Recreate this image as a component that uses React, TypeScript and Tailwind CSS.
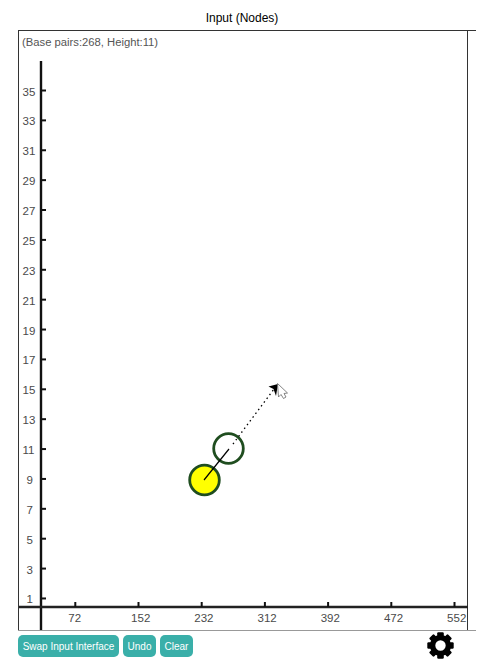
const Y_LABELS = [35, 33, 31, 29, 27, 25, 23, 21, 19, 17, 15, 13, 11, 9, 7, 5, 3, 1];
const X_LABELS = [72, 152, 232, 312, 392, 472, 552];
const GEAR_TEETH = [0, 45, 90, 135, 180, 225, 270, 315];

// chart coordinates are relative to the frame (frame starts at x=19, y=31)
function Chart() {
  return (
    <svg width="449" height="599" className="block" style={{ fontFamily: '"Liberation Sans", Arial, sans-serif' }}>
      <line x1="22" y1="30" x2="22" y2="599" stroke="#111" strokeWidth="2.4" />
      <line x1="0" y1="576" x2="449" y2="576" stroke="#222" strokeWidth="2.4" />
      {Y_LABELS.map((n, i) => {
        const y = 59.5 + i * 29.88;
        return (
          <g key={n}>
            <line x1="22" y1={y} x2="27" y2={y} stroke="#111" strokeWidth="2" />
            <text x={n < 10 ? 7.5 : 3.5} y={y + 5} fontSize="11.5" fill="#4a4a4a">
              {n}
            </text>
          </g>
        );
      })}
      {X_LABELS.map((n, i) => {
        const x = 56.3 + i * 63.2;
        return (
          <g key={n}>
            <line x1={x} y1="571" x2={x} y2="576" stroke="#111" strokeWidth="2" />
            <text x={x + (i === 0 ? -0.6 : 2.2)} y="591" fontSize="11.5" fill="#4a4a4a" textAnchor="middle">
              {n}
            </text>
          </g>
        );
      })}
      <circle cx="185.5" cy="449" r="14.8" fill="#ffff00" stroke="#1f4d1f" strokeWidth="2.8" />
      <circle cx="209.5" cy="417.5" r="14.8" fill="none" stroke="#1f4d1f" strokeWidth="2.8" />
      <line x1="185" y1="449" x2="210" y2="418" stroke="#000" strokeWidth="1.2" />
      <line x1="214" y1="413" x2="255" y2="358" stroke="#000" strokeWidth="1.3" strokeDasharray="1.5 3.2" />
      <path d="M259 353 L249.5 355.5 L254.5 358 L257 365 Z" fill="#000" />
      <path
        d="M258.5 352.5 L268.5 362 L265 362.5 L267 366 L264.5 367.5 L262 363.5 L259.5 366 Z"
        fill="#fff"
        stroke="#666"
        strokeWidth="0.8"
      />
    </svg>
  );
}

function Gear() {
  return (
    <svg width="27" height="27" viewBox="-13.5 -13.5 27 27" className="block">
      <circle r="7.9" fill="none" stroke="#000" strokeWidth="5.4" />
      {GEAR_TEETH.map((deg) => (
        <rect key={deg} x="-3.3" y="-13.2" width="6.6" height="4.5" rx="1.2" fill="#000" transform={`rotate(${deg})`} />
      ))}
    </svg>
  );
}

export default function App() {
  return (
    <div className="w-[486px] h-[663px] bg-white overflow-hidden font-['Liberation_Sans',Arial,sans-serif]">
      <div className="w-[484px] h-[30px] pt-[11px] text-center text-[12px] leading-[14px] text-black">
        Input (Nodes)
      </div>
      <div className="ml-[18px] w-[458px] border-t border-t-[#333] border-b border-b-[#999]">
        <div className="relative w-[450px] border-l border-r border-[#333]">
          <div className="absolute left-[3px] top-[4px] text-[11.25px] leading-[14px] text-[#555]">
            (Base pairs:268, Height:11)
          </div>
          <Chart />
        </div>
      </div>
      <div className="ml-[18px] w-[458px] mt-[4px] flex items-start">
        <button className="h-[22px] w-[101px] rounded-[5px] bg-[#3aafa9] text-[10px] text-white">
          Swap Input Interface
        </button>
        <button className="ml-[4px] h-[22px] w-[33px] rounded-[5px] bg-[#3aafa9] text-[10px] text-white">Undo</button>
        <button className="ml-[4px] h-[22px] w-[33px] rounded-[5px] bg-[#3aafa9] text-[10px] text-white">Clear</button>
        <div className="ml-[234px] -mt-[3px]">
          <Gear />
        </div>
      </div>
    </div>
  );
}
